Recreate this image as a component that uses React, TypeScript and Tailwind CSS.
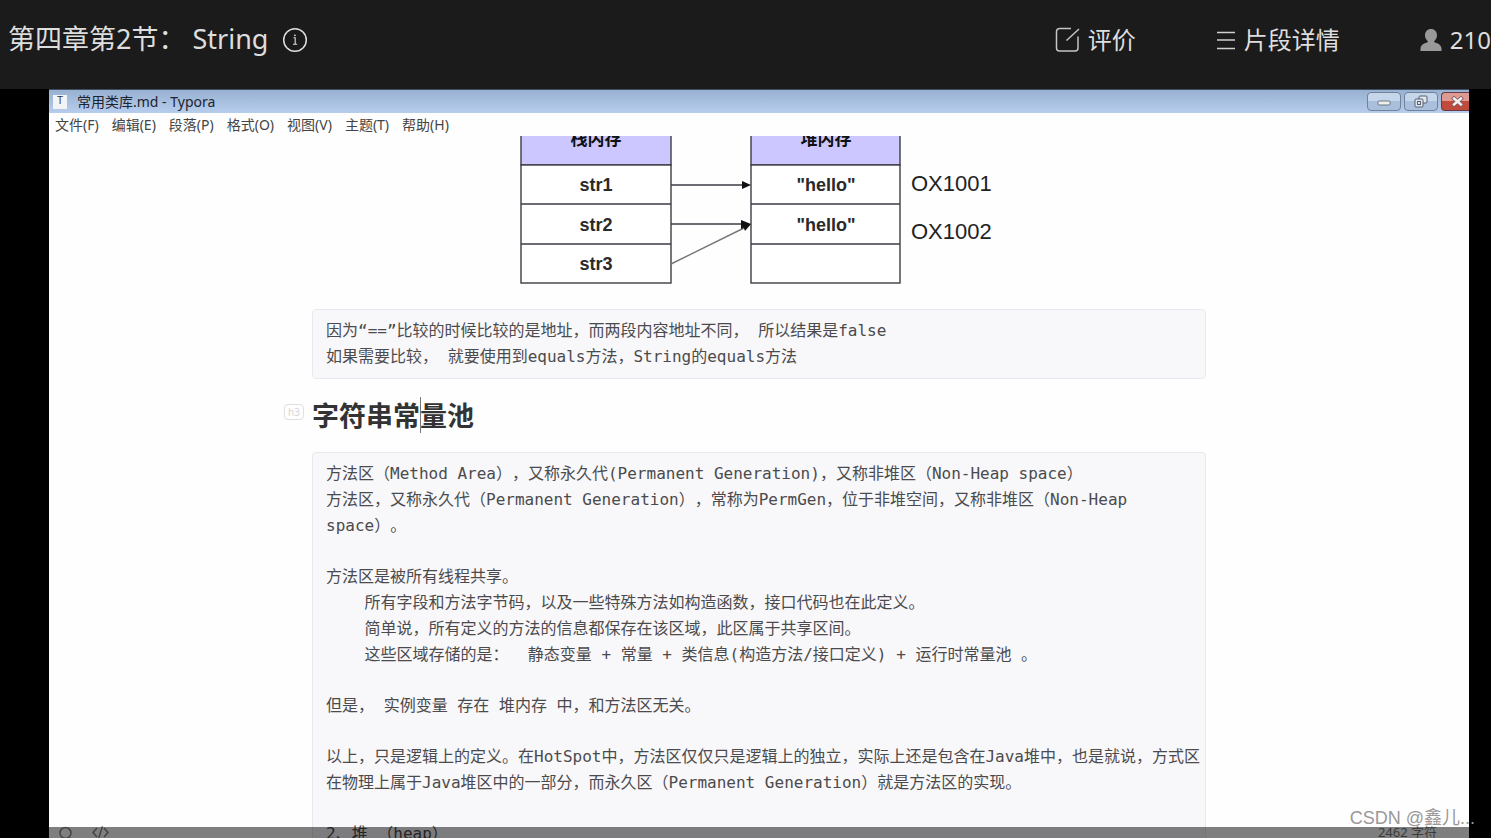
import { ReactNode } from "react";

interface HeaderLinkProps {
  icon: ReactNode;
  label: string;
}

const menus = ["文件(F)", "编辑(E)", "段落(P)", "格式(O)", "视图(V)", "主题(T)", "帮助(H)"];

const compareNotes = [
  [
    "因为“==”比较的时候比较的是地址，而两段内容地址不同， 所以结果是false",
    "如果需要比较， 就要使用到equals方法，String的equals方法",
  ],
];

const poolNotes = [
  [
    "方法区（Method Area），又称永久代(Permanent Generation)，又称非堆区（Non-Heap space）",
    "方法区，又称永久代（Permanent Generation），常称为PermGen，位于非堆空间，又称非堆区（Non-Heap",
    "space）。",
  ],
  [
    "方法区是被所有线程共享。",
    "    所有字段和方法字节码，以及一些特殊方法如构造函数，接口代码也在此定义。",
    "    简单说，所有定义的方法的信息都保存在该区域，此区属于共享区间。",
    "    这些区域存储的是：  静态变量 + 常量 + 类信息(构造方法/接口定义) + 运行时常量池 。",
  ],
  ["但是， 实例变量 存在 堆内存 中，和方法区无关。"],
  [
    "以上，只是逻辑上的定义。在HotSpot中，方法区仅仅只是逻辑上的独立，实际上还是包含在Java堆中，也是就说，方式区",
    "在物理上属于Java堆区中的一部分，而永久区（Permanent Generation）就是方法区的实现。",
  ],
  ["2、堆 （heap）"],
];

function HeaderLink({ icon, label }: HeaderLinkProps) {
  return (
    <button type="button" className="flex items-center gap-2 whitespace-nowrap text-2xl">
      {icon}
      {label}
    </button>
  );
}

function CodeBlock({ groups }: { groups: string[][] }) {
  return (
    <div className="flex flex-col gap-[25px] rounded-sm border border-[#e9e8ec] bg-[#f8f7fa] py-2 pl-[13px] font-['DejaVu_Sans_Mono','Noto_Sans_CJK_SC',monospace] text-base leading-[26px] text-[#4b4b4d] [text-spacing-trim:space-all]">
      {groups.map((lines, i) => (
        <div key={i}>
          {lines.map((line) => (
            <p key={line} className="whitespace-pre">
              {line}
            </p>
          ))}
        </div>
      ))}
    </div>
  );
}

// Stack / heap reference drawing
function MemoryDiagram() {
  return (
    <svg
      width="478"
      height="149"
      viewBox="0 0 478 149"
      className="mx-auto block font-['Liberation_Sans','Noto_Sans_CJK_SC',sans-serif]"
    >
      <g stroke="#3c3c44" strokeWidth="1.4">
        <rect x="1" y="-12" width="150" height="41" fill="#ccc8ff" />
        <rect x="1" y="29" width="150" height="118" fill="#fff" />
        <path d="M1 68H151M1 108H151" />
        <rect x="231" y="-12" width="149" height="41" fill="#ccc8ff" />
        <rect x="231" y="29" width="149" height="118" fill="#fff" />
        <path d="M231 68H380M231 108H380" />
        <path d="M151 49H224M151 88H224" />
        <path d="M151 128L226 91" stroke="#777" />
      </g>
      <path d="M222 45l9 4-9 4zM221 84l10 4-10 5zM222 87l9 1-6 7z" fill="#111" />
      <g textAnchor="middle" fontSize="17" fontWeight="700" fill="#111">
        <text x="76" y="9">栈内存</text>
        <text x="306" y="9">堆内存</text>
      </g>
      <g textAnchor="middle" fontSize="18" fontWeight="700" fill="#2a2a2a">
        <text x="76" y="55">str1</text>
        <text x="76" y="95">str2</text>
        <text x="76" y="134">str3</text>
        <text x="306" y="55">"hello"</text>
        <text x="306" y="95">"hello"</text>
      </g>
      <g fontSize="22" fill="#222">
        <text x="391" y="55">OX1001</text>
        <text x="391" y="103">OX1002</text>
      </g>
    </svg>
  );
}

function WindowControls() {
  return (
    <div className="flex gap-[3px]">
      <button
        type="button"
        aria-label="Minimize"
        className="flex h-[19px] w-[34px] items-center justify-center rounded-sm border border-[#71839b] bg-linear-to-b from-[#c6d6ea] from-50% to-[#a9bfdc] to-50%"
      >
        <svg width="14" height="8" viewBox="0 0 14 8">
          <rect x="1" y="3" width="12" height="4" rx="1" fill="#f1f1ec" stroke="#6c7685" />
        </svg>
      </button>
      <button
        type="button"
        aria-label="Restore"
        className="flex h-[19px] w-[34px] items-center justify-center rounded-sm border border-[#71839b] bg-linear-to-b from-[#c6d6ea] from-50% to-[#a9bfdc] to-50%"
      >
        <svg width="14" height="13" viewBox="0 0 14 13" fill="#dfe6ef" stroke="#566071">
          <rect x="5" y="1" width="8" height="7" rx="1" />
          <rect x="1" y="4" width="8" height="8" rx="1" />
          <rect x="3.500" y="6.500" width="3" height="3" />
        </svg>
      </button>
      <button
        type="button"
        aria-label="Close"
        className="flex h-[19px] w-7 items-center justify-center rounded-l-sm border border-r-0 border-[#6b3c46] bg-linear-to-b from-[#dc9a93] from-50% to-[#c04b3c] to-50% pl-1"
      >
        <svg width="13" height="11" viewBox="0 0 13 11" fill="none" strokeLinecap="square">
          <path d="M3 2.500L10 8.500M10 2.500L3 8.500" stroke="#7b5a60" strokeWidth="4" />
          <path d="M3 2.500L10 8.500M10 2.500L3 8.500" stroke="#f4f0f0" strokeWidth="2.400" />
        </svg>
      </button>
    </div>
  );
}

export default function App() {
  return (
    <div className="relative flex h-screen flex-col overflow-hidden bg-black font-['Noto_Sans','Noto_Sans_CJK_SC',sans-serif]">
      <header className="flex h-[89px] shrink-0 items-center justify-between bg-[#1b1b1b] pb-[10px] pl-2 text-[#dedede]">
        <div className="flex items-center gap-[14px]">
          <h1 className="whitespace-pre text-[27px]">第四章第2节： String</h1>
          <svg width="26" height="26" viewBox="0 0 26 26" fill="none" stroke="#dedede">
            <circle cx="13" cy="13" r="11.300" strokeWidth="1.500" />
            <path d="M11.500 10.800h1.700v6.400M11 17.300h4.200" strokeWidth="1.100" />
            <circle cx="12.900" cy="8.300" r="0.900" fill="#dedede" stroke="none" />
          </svg>
        </div>
        <nav className="flex gap-20">
          <HeaderLink
            label="评价"
            icon={
              <svg width="25" height="25" viewBox="0 0 25 25" fill="none" stroke="#c4c4c4" strokeWidth="1.500">
                <path d="M16 1.500H4.500a3 3 0 0 0-3 3V21a3 3 0 0 0 3 3H20a3 3 0 0 0 3-3V9.500M11.500 13.500L24 2" />
              </svg>
            }
          />
          <HeaderLink
            label="片段详情"
            icon={
              <svg width="20" height="20" viewBox="0 0 20 20" stroke="#d0d0d0" strokeWidth="1.400">
                <path d="M1 2.500H19M1 10H19M1 18.500H19" />
              </svg>
            }
          />
          <HeaderLink
            label="210"
            icon={
              <svg width="22" height="22" viewBox="0 0 22 22" fill="#999">
                <path d="M11 0c3.600 0 6 2.600 6 6.300 0 2.500-1 4.400-2.700 5.600v1.300c4 .9 7.200 3.300 7.200 6.400V22H.5v-2.400c0-3.100 3.200-5.500 7.200-6.400v-1.300C6 10.700 5 8.800 5 6.300 5 2.600 7.400 0 11 0z" />
              </svg>
            }
          />
        </nav>
      </header>

      <main className="relative mr-[22px] ml-[49px] flex min-h-0 flex-1 flex-col overflow-hidden bg-[#fefefe]">
        <div className="flex h-6 shrink-0 items-center justify-between border-t border-[#3d4c60] bg-linear-to-b from-[#98b1d0] to-[#b7cdee] pl-1 text-sm text-[#1c2430]">
          <div className="flex items-center gap-[10px]">
            <span className="flex h-[14px] w-[14px] items-center justify-center bg-[#f3f4f5] font-['Liberation_Sans',sans-serif] text-[10px] text-[#333]">
              T
            </span>
            <span>常用类库.md - Typora</span>
          </div>
          <WindowControls />
        </div>
        <div className="flex h-[23px] shrink-0 items-center gap-[13px] px-1.5 text-sm text-[#444]">
          {menus.map((menu) => (
            <button key={menu} type="button">
              {menu}
            </button>
          ))}
        </div>

        <div className="min-h-0 flex-1 overflow-hidden">
          <article className="mx-auto max-w-[894px]">
            <MemoryDiagram />
            <div className="mt-6">
              <CodeBlock groups={compareNotes} />
            </div>
            <div className="relative mt-[17px] mb-4">
              <span className="absolute top-2 -left-7 rounded-sm border border-[#e0e0e0] px-[3px] text-[10px] leading-[14px] text-[#d6d6d6]">
                h3
              </span>
              <h3 className="text-[27px] leading-10 font-bold text-[#333]">
                字符串常
                <span className="relative">
                  <span className="absolute top-0 left-0 h-9 w-px bg-[#777]" />
                  量池
                </span>
              </h3>
            </div>
            <CodeBlock groups={poolNotes} />
          </article>
        </div>

        {/* status bar, under the dimmed player controls */}
        <div className="absolute inset-x-0 bottom-0 flex h-3 items-start justify-between pr-8 pl-[10px] text-[13px] leading-3 text-[#777]">
          <div className="flex gap-[19px]">
            <svg width="14" height="14" viewBox="0 0 14 14" fill="none" stroke="#888" strokeWidth="1.500">
              <circle cx="6.500" cy="7" r="5.500" />
            </svg>
            <svg width="17" height="14" viewBox="0 0 17 14" fill="none" stroke="#888" strokeWidth="1.500">
              <path d="M5 2L1 6.500 5 11M12 2l4 4.500L12 11M10.500 0L6.500 13" />
            </svg>
          </div>
          <span>2462 字符</span>
        </div>
        <div className="absolute inset-x-0 bottom-0 h-[11px] bg-black/50" />
      </main>

      <div className="absolute right-4 bottom-2 font-['Liberation_Sans','Noto_Sans_CJK_SC',sans-serif] text-lg leading-6 text-[#999]">
        CSDN @鑫儿...
      </div>
    </div>
  );
}
